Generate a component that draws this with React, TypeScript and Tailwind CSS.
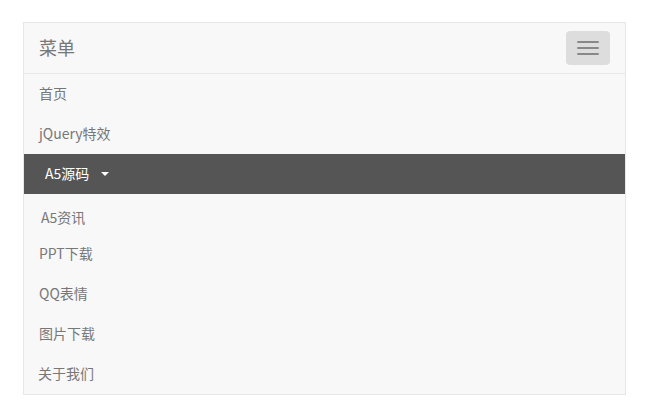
export default function App() {
  const font = { fontFamily: '"Noto Sans CJK SC", "Liberation Sans", sans-serif' };
  const row = "h-[40px] flex items-center pb-[1px] text-[14px] text-[#777]";
  return (
    <div className="w-[650px] h-[420px] bg-white pt-[22px] pl-[23px]" style={font}>
      <div className="w-[603px] h-[373px] border border-[#e7e7e7] bg-[#f8f8f8] flex flex-col">
        <div className="h-[51px] border-b border-[#e7e7e7] flex items-start justify-between">
          <div className="pl-[15px] h-[50px] pb-[2px] flex items-center text-[18px] leading-[20px] text-[#777]">菜单</div>
          <div className="mt-[8px] mr-[15px] w-[44px] h-[34px] rounded-[4px] bg-[#ddd] flex flex-col items-center justify-center gap-[4px]">
            <span className="block w-[22px] h-[2px] rounded-[1px] bg-[#888]" />
            <span className="block w-[22px] h-[2px] rounded-[1px] bg-[#888]" />
            <span className="block w-[22px] h-[2px] rounded-[1px] bg-[#888]" />
          </div>
        </div>
        <div className={`${row} pl-[15px]`}>首页</div>
        <div className={`${row} pl-[15px]`}>jQuery特效</div>
        <div className="h-[40px] flex items-center pb-[1px] pl-[21px] text-[14px] text-white bg-[#555]">
          <span>A5源码</span>
          <span className="ml-[12px] mt-[1px] w-0 h-0 border-l-[4px] border-r-[4px] border-t-[4px] border-l-transparent border-r-transparent border-t-white" />
        </div>
        <div className="h-[40px] pt-[13px] pl-[17px] text-[14px] leading-[20px] text-[#777]">A5资讯</div>
        <div className={`${row} pl-[15px]`}>PPT下载</div>
        <div className={`${row} pl-[15px]`}>QQ表情</div>
        <div className={`${row} pl-[15px]`}>图片下载</div>
        <div className={`${row} pl-[14px]`}>关于我们</div>
      </div>
    </div>
  );
}
